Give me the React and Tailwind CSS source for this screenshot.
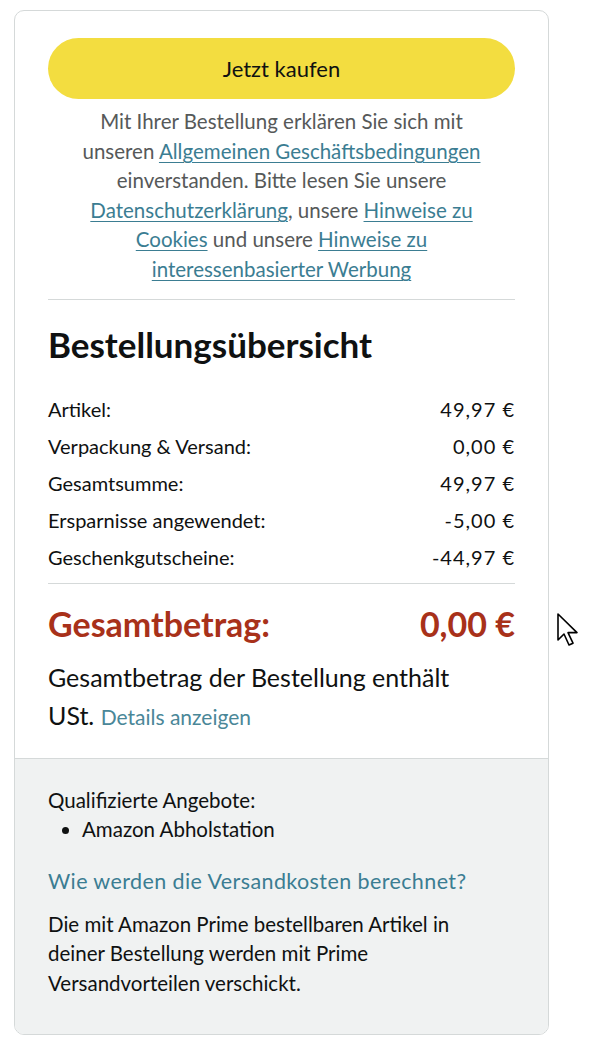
import React from 'react';

const rows = [
  ['Artikel:', '49,97 €'],
  ['Verpackung & Versand:', '0,00 €'],
  ['Gesamtsumme:', '49,97 €'],
  ['Ersparnisse angewendet:', '-5,00 €'],
  ['Geschenkgutscheine:', '-44,97 €'],
];

const Link = ({ children }) => (
  <a href="#" className="text-[#3b7d92] underline underline-offset-[3px] decoration-1">
    {children}
  </a>
);

const App = () => {
  return (
    <div className="relative w-[590px] h-[1050px] bg-white font-['Lato',sans-serif] text-[#0f1111]">
      <div className="absolute left-[14px] top-[10px] w-[535px] rounded-[10px] border border-[#d5d9d9] overflow-hidden">
        <div className="px-[33px] pt-[27px] pb-[22px]">
          <button className="w-full h-[61px] rounded-full bg-[#f3dd40] text-[22px] text-[#0f1111]">
            Jetzt kaufen
          </button>
          <p className="mt-[8px] mx-auto w-[414px] text-center text-[20.5px] leading-[29.6px] text-[#565959]">
            Mit Ihrer Bestellung erklären Sie sich mit unseren <Link>Allgemeinen Geschäftsbedingungen</Link> einverstanden. Bitte lesen Sie unsere <Link>Datenschutzerklärung</Link>, unsere <Link>Hinweise zu Cookies</Link> und unsere <Link>Hinweise zu interessenbasierter Werbung</Link>
          </p>
          <div className="mt-[14px] border-t border-[#d5d9d9]" />

          <h2 className="mt-[24px] text-[35px] font-bold leading-[40px]">Bestellungsübersicht</h2>

          <div className="mt-[27px] flex flex-col text-[20px]">
            {rows.map(([label, value]) => (
              <div key={label} className="flex justify-between h-[37px] items-center">
                <span>{label}</span>
                <span className="tracking-[1px]">{value}</span>
              </div>
            ))}
          </div>
          <div className="mt-[7px] border-t border-[#d5d9d9]" />

          <div className="mt-[20px] flex justify-between text-[34px] font-bold text-[#a8311a] leading-[40px]">
            <span>Gesamtbetrag:</span>
            <span>0,00 €</span>
          </div>
          <p className="mt-[14px] text-[25px] leading-[38px]">
            Gesamtbetrag der Bestellung enthält{' '}
            <span className="whitespace-nowrap">
              USt. <a href="#" className="text-[21px] text-[#4a8798]">Details anzeigen</a>
            </span>
          </p>
        </div>

        <div className="bg-[#f0f2f2] border-t border-[#d5d9d9] pl-[33px] pr-[50px] pt-[27px] pb-[36px] text-[20.5px]">
          <p className="leading-[29px]">Qualifizierte Angebote:</p>
          <ul className="list-disc pl-[34px] leading-[29px]">
            <li>Amazon Abholstation</li>
          </ul>
          <p className="mt-[22px] leading-[30px] text-[21.5px] tracking-[0.4px] text-[#3b7d92] whitespace-nowrap">Wie werden die Versandkosten berechnet?</p>
          <p className="mt-[14px] leading-[29.5px]">
            Die mit Amazon Prime bestellbaren Artikel in deiner Bestellung werden mit Prime Versandvorteilen verschickt.
          </p>
        </div>
      </div>

      <svg className="absolute left-[556px] top-[612px]" width="26" height="36" viewBox="0 0 13 18">
        <path d="M1 1 L1 14 L4 11 L6.5 16.5 L8.5 15.6 L6 10.3 L10.5 10.3 Z" fill="white" stroke="black" strokeWidth="0.8" strokeLinejoin="round" />
      </svg>
    </div>
  );
};

export default App;
